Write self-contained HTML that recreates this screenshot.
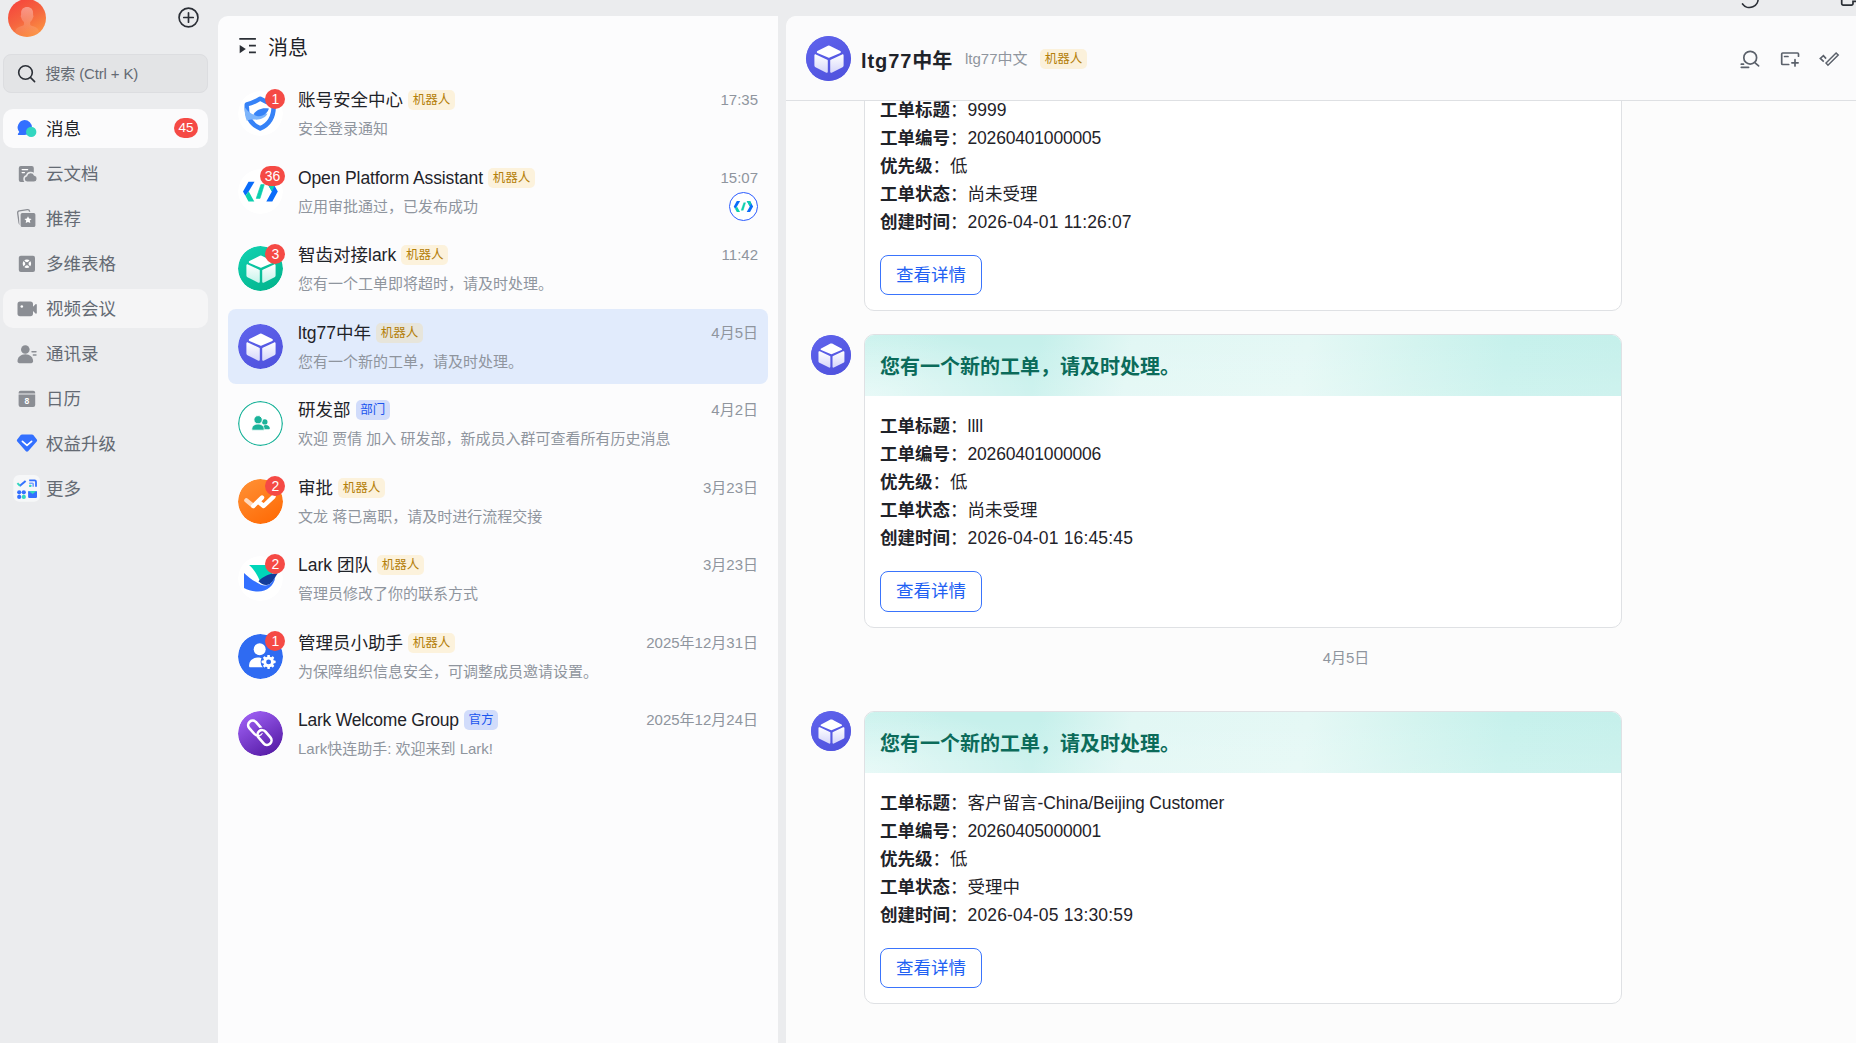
<!DOCTYPE html>
<html lang="zh-CN">
<head>
<meta charset="utf-8">
<title>Lark</title>
<style>
*{box-sizing:border-box;margin:0;padding:0}
html,body{width:1856px;height:1043px;overflow:hidden}
body{background:#ebecee;font-family:"Liberation Sans","Noto Sans CJK SC",sans-serif;color:#1f2329;position:relative;-webkit-font-smoothing:antialiased}
.abs{position:absolute}
svg{display:block}
/* sidebar */
#side{position:absolute;left:0;top:0;width:218px;height:1043px}
.me{position:absolute;left:7.900px;top:-1.200px;width:38.200px;height:38.200px;border-radius:50%;background:linear-gradient(150deg,#f6423c 5%,#f5663f 50%,#fd9a42 95%);overflow:hidden}
.plus{position:absolute;left:177.700px;top:7px;width:21px;height:21px}
.search{position:absolute;left:3px;top:54px;width:205px;height:39px;border-radius:8px;background:#e3e4e6;border:1px solid #dcdde0}
.search svg{position:absolute;left:12.800px;top:9.200px}
.search span{position:absolute;left:41.500px;top:1px;line-height:36px;font-size:15px;letter-spacing:-.150px;color:#646a73;white-space:nowrap}
.nav{position:absolute;left:3px;width:205px;height:39px;border-radius:10px}
.nav.on{background:#fbfbfc}
.nav.hv{background:#f5f5f6}
.nav .ic{position:absolute;left:12px;top:7px;width:24px;height:24px}
.nav .tx{position:absolute;left:43px;top:1px;line-height:38px;font-size:17.5px;color:#646a73;white-space:nowrap}
.nav.on .tx{color:#1f2329}
.nav .cnt{position:absolute;right:10px;top:9px;height:20px;min-width:24px;padding:0 4px;border-radius:10px;background:#f54a45;color:#fff;font-size:13.5px;line-height:20px;text-align:center}
/* list panel */
#list{position:absolute;left:218px;top:16px;width:560px;height:1027px;background:#fcfcfd;border-top-left-radius:10px}
.lh{position:absolute;left:50px;top:17px;font-size:20px;line-height:30px;color:#1f2329}
.it{position:absolute;left:10px;width:540px;height:75px;border-radius:8px}
.it.sel{background:#e1ebfc}
.it .av{position:absolute;left:10.200px;top:15px;width:45px;height:45px;border-radius:50%;overflow:hidden}
.it .nm{position:absolute;left:70px;top:10px;height:28px;line-height:28px;font-size:17.5px;color:#1f2329;white-space:nowrap;display:flex;align-items:center}
.it .sb{position:absolute;left:70px;top:42px;line-height:22px;font-size:15px;color:#8f959e;white-space:nowrap}
.it .tm{position:absolute;right:10px;top:13px;line-height:22px;font-size:15px;color:#8f959e;white-space:nowrap}
.tag{display:inline-block;letter-spacing:0;margin-left:5px;height:20px;line-height:20px;padding:0 4.750px;border-radius:5px;font-size:12.500px;background:rgba(255,207,92,.2);color:#b47f0a}
.tag.b{background:#d1dcfb;color:#1a55ee}
.bd{position:absolute;top:12.700px;height:20px;min-width:20px;border-radius:10px;background:#f54a45;color:#fff;font-size:14px;line-height:20px;text-align:center;padding:0 5px}
/* chat */
#chat{position:absolute;left:786px;top:16px;width:1070px;height:1027px;background:#fcfcfc;border-top-left-radius:10px;overflow:hidden}
#chead{position:absolute;left:0;top:0;width:1070px;height:85px;border-bottom:1px solid #dee0e3;background:#fbfbfc;z-index:5;border-top-left-radius:10px}
.card{position:absolute;left:78px;width:758px;background:#fff;border:1px solid #dfe1e4;border-radius:10px;overflow:hidden}
.ch{position:absolute;left:0;top:0;width:100%;height:61px;background:radial-gradient(ellipse 170px 70px at 0% 100%,rgba(255,255,255,.5),rgba(255,255,255,0) 100%),linear-gradient(180deg,rgba(255,255,255,0) 0%,rgba(255,255,255,.16) 100%),linear-gradient(100deg,#c9f2ed 0%,#c5f0eb 10%,#c5f0eb 23%,#e1f7f4 35%,#e4f8f5 58%,#d3f4ef 72%,#c6f1ec 84%,#c5f0eb 100%)}
.ch span{position:absolute;left:15px;top:17px;font-size:20px;line-height:30px;font-weight:bold;color:#0b6b5a;white-space:nowrap}
.ln{position:absolute;left:15px;font-size:17.5px;line-height:28px;white-space:nowrap;color:#1f2329}
.ln b{font-weight:bold}
.btn{position:absolute;left:15px;width:102px;height:40px;border:1px solid #3a74fc;border-radius:8px;color:#2160f3;font-size:17.5px;line-height:38px;text-align:center;background:#fff}
.mav{position:absolute;left:25px;width:40px;height:40px;border-radius:50%;overflow:hidden}
</style>
</head>
<body>
<div id="side">
  <div class="me"><svg width="38.200" height="38.200" viewBox="0 0 38.200 38.200"><defs><linearGradient id="meg" x1="0" y1="0" x2="0" y2="1"><stop offset="0" stop-color="#fff" stop-opacity=".38"/><stop offset="1" stop-color="#fff" stop-opacity="0"/></linearGradient></defs><path d="M19.100 8.100c3.600 0 6 2.200 6 5.800v2.400c.5.200.6 1.600-.200 2.400-.5 2-1.500 3.300-2.700 4.300v2.300c0 .8.500 1.300 1.300 1.500 3.500.8 6.500 2 7.200 4.700l.8 6.700H6.700l.8-6.700c.7-2.700 3.700-3.900 7.200-4.700.8-.2 1.300-.7 1.300-1.500V23c-1.200-1-2.200-2.300-2.700-4.300-.8-.8-.7-2.200-.2-2.400v-2.400c0-3.600 2.400-5.800 6-5.800z" fill="url(#meg)"/></svg></div>
  <svg class="plus" viewBox="0 0 20 20"><circle cx="10" cy="10" r="9" fill="none" stroke="#2b2f36" stroke-width="1.6"/><path d="M10 5.5v9M5.5 10h9" stroke="#2b2f36" stroke-width="1.6" stroke-linecap="round"/></svg>
  <div class="search"><svg width="20" height="20" viewBox="0 0 20 20"><circle cx="8.5" cy="8.5" r="6.8" fill="none" stroke="#2b2f36" stroke-width="1.6"/><path d="M13.6 13.6l4 4" stroke="#2b2f36" stroke-width="1.6" stroke-linecap="round"/></svg><span>搜索 (Ctrl + K)</span></div>
  <div class="nav on" style="top:109px"><div class="ic"><svg width="24" height="24" viewBox="0 0 24 24"><path d="M9.5 4a7.5 7.5 0 1 1 0 15H3.6c-.7 0-1-.8-.6-1.3l1.3-1.6A7.5 7.5 0 0 1 9.5 4z" fill="#3370ff"/><circle cx="16.2" cy="15.9" r="5.2" fill="#33d6c0"/></svg></div><div class="tx">消息</div><div class="cnt">45</div></div>
  <div class="nav" style="top:154px"><div class="ic"><svg width="24" height="24" viewBox="0 0 24 24"><rect x="3.8" y="5" width="15" height="16" rx="2" fill="#8b8e94"/><path d="M7.200 8.600h5.400M7.200 11.600h2.200" stroke="#fff" stroke-width="1.400" stroke-linecap="round"/><path d="M12 21.2a3.3 3.3 0 0 1-.4-6.5 4.2 4.2 0 0 1 8-.6 3.6 3.6 0 0 1-.8 7.100z" fill="#8b8e94" stroke="#ebecee" stroke-width="1.5"/></svg></div><div class="tx">云文档</div></div>
  <div class="nav" style="top:199px"><div class="ic"><svg width="24" height="24" viewBox="0 0 24 24"><rect x="3.300" y="4.200" width="12" height="14" rx="2" fill="none" stroke="#8b8e94" stroke-width="1.300" transform="rotate(-8 9 11)"/><rect x="5" y="6.4" width="16" height="15.2" rx="2.2" fill="#8b8e94" stroke="#ebecee" stroke-width="1.2"/><path d="M13 10.300l1.100 2.300 2.500.3-1.800 1.700.5 2.500-2.300-1.200-2.300 1.200.5-2.500-1.800-1.700 2.500-.3z" fill="#fff"/></svg></div><div class="tx">推荐</div></div>
  <div class="nav" style="top:244px"><div class="ic"><svg width="24" height="24" viewBox="0 0 24 24"><rect x="3.800" y="4.700" width="16.200" height="16.200" rx="2" fill="#8b8e94"/><circle cx="11.900" cy="12.800" r="3" fill="none" stroke="#fff" stroke-width="2.400"/><path d="M8.500 9.400l6.800 6.800M15.300 9.400l-6.800 6.800" stroke="#8b8e94" stroke-width="1.100"/></svg></div><div class="tx">多维表格</div></div>
  <div class="nav hv" style="top:289px"><div class="ic"><svg width="24" height="24" viewBox="0 0 24 24"><rect x="2.500" y="5.500" width="15.500" height="14.700" rx="2.600" fill="#8b8e94"/><path d="M17.500 11.300l3-3.100c.5-.5 1.300-.1 1.300.600v8.100c0 .7-.8 1.100-1.300.600l-3-3.100z" fill="#8b8e94"/><circle cx="6.800" cy="10.500" r="1.300" fill="#fff"/></svg></div><div class="tx">视频会议</div></div>
  <div class="nav" style="top:334px"><div class="ic"><svg width="24" height="24" viewBox="0 0 24 24"><circle cx="10.300" cy="8.500" r="4.300" fill="#8b8e94"/><path d="M2.500 20.300c0-4 3.200-7 7.800-7s7.800 3 7.800 7c0 1.100-.8 1.900-1.900 1.900H4.400c-1.100 0-1.900-.8-1.900-1.900z" fill="#8b8e94"/><path d="M17 10.800h4M18.300 14h2.700" stroke="#8b8e94" stroke-width="1.400" stroke-linecap="round"/></svg></div><div class="tx">通讯录</div></div>
  <div class="nav" style="top:379px"><div class="ic"><svg width="24" height="24" viewBox="0 0 24 24"><path d="M5.600 4.800h12.600a2 2 0 0 1 2 2v.6H3.600v-.6a2 2 0 0 1 2-2z" fill="#8b8e94"/><path d="M3.600 8.600h16.600V19a2 2 0 0 1-2 2H5.600a2 2 0 0 1-2-2z" fill="#8b8e94"/><text x="11.900" y="18" font-size="8.500" font-weight="bold" fill="#fff" text-anchor="middle" font-family="Liberation Sans, sans-serif">8</text></svg></div><div class="tx">日历</div></div>
  <div class="nav" style="top:424px"><div class="ic"><svg width="24" height="24" viewBox="0 0 24 24"><path d="M7 3.400h10c.5 0 1 .2 1.300.6l3.500 4.600c.5.600.4 1.400-.1 1.900l-8.600 9.700c-.6.600-1.600.6-2.200 0L2.300 10.500c-.5-.5-.6-1.300-.1-1.900l3.500-4.600c.3-.4.800-.6 1.300-.6z" fill="#3370ff"/><path d="M7.400 10.400l4.600 3.900 4.600-3.900" fill="none" stroke="#fff" stroke-width="1.700" stroke-linecap="round" stroke-linejoin="round"/></svg></div><div class="tx">权益升级</div></div>
  <div class="nav" style="top:469px"><div class="ic"><svg width="28" height="28" viewBox="-2 -2 28 28" style="margin:-2px"><rect x="-1.700" y="-1.100" width="26.800" height="26.800" rx="6" fill="#f6f7f8"/><path d="M4.600 10l6-5" stroke="#3370ff" stroke-width="2" stroke-linecap="butt"/><path d="M2.400 7.100l2.600 2.600" stroke="#33d6c0" stroke-width="2"/><path d="M14.200 4.400h5.500a1.300 1.300 0 0 1 1.300 1.300v5" fill="none" stroke="#3370ff" stroke-width="1.800"/><path d="M14.200 7.300h3.200a.8.800 0 0 1 .8.800v2.600" fill="none" stroke="#7aa2ff" stroke-width="1.600"/><rect x="14.100" y="8.800" width="2.300" height="2.300" rx=".5" fill="#33d6c0"/><circle cx="4.200" cy="16.300" r="2.100" fill="#3370ff"/><circle cx="8.800" cy="16.300" r="2.100" fill="#3370ff"/><circle cx="4.200" cy="20.900" r="2.100" fill="#3370ff"/><circle cx="8.800" cy="20.900" r="2.100" fill="#33d6c0"/><rect x="13.100" y="15" width="8.900" height="6.900" rx=".8" fill="#3370ff"/><path d="M13.600 15h7.900l-3.950 3z" fill="#33d6c0"/></svg></div><div class="tx">更多</div></div>
</div>
<svg class="abs" style="left:1736px;top:0" width="120" height="10" viewBox="0 0 120 10" fill="none" stroke="#2b2f36" stroke-width="1.700"><path d="M21.940 -2.560A8.570 8.570 0 0 1 6.570 3.970" stroke-linecap="round"/><path d="M105.700 -2V3.600a1.500 1.500 0 0 0 1.500 1.500h8.300a1.500 1.500 0 0 0 1.500-1.500V1.400h3"/></svg>
<div id="list">
  <svg class="abs" style="left:20px;top:20px" width="20" height="20" viewBox="0 0 20 20"><path d="M1.300 2.800h16.600M11 9.600h6.900M11 16.400h6.900" stroke="#2b2f36" stroke-width="1.800" fill="none"/><path d="M1.700 9l6.100 4.100-6.100 4.100z" fill="#2b2f36"/></svg>
  <div class="lh">消息</div>
  <div class="it" style="top:60px"><div class="av"><svg width="45" height="45" viewBox="0 0 45 45"><circle cx="22.500" cy="22.500" r="22.500" fill="#fff"/><path d="M22.200 7.700C18.200 10.200 13.700 12.300 8.800 13.400C8.300 24 12 33 22.200 37.400C32.400 33 36.100 24 35.600 13.400C30.700 12.300 26.200 10.200 22.200 7.700z" fill="none" stroke="#3682f7" stroke-width="4.500" stroke-linejoin="round"/><path d="M6.600 16C9.500 20.500 14 23.500 17.500 24L29.500 22.500C27.500 27 22 29 17 28.600C13 28.400 10.500 29 8.800 29.800C7 25.500 6.500 20.500 6.600 16z" fill="#7db5fb"/><path d="M15.500 23.300C18 19 24 16 30.900 17.600C29.500 22.500 25 26 19 25C17.500 24.700 16.300 24 15.500 23.300z" fill="#3682f7"/></svg></div><div class="bd" style="left:37.300px">1</div><div class="nm">账号安全中心<span class="tag">机器人</span></div><div class="sb">安全登录通知</div><div class="tm">17:35</div></div>
  <div class="it" style="top:137.5px"><div class="av"><svg width="45" height="45" viewBox="0 0 45 45"><circle cx="22.5" cy="22.500" r="22.500" fill="#fff"/><path d="M10.500 12.700H16.500L10.700 22.600 7.400 26.800 5 22.600z" fill="#0a6cfa"/><path d="M10.700 22.600L16.300 32.400H10.500L7.400 26.800z" fill="#0ccfae"/><path d="M22.900 15.600H26.300L22 29.400H18.200z" fill="#0ccfae" stroke="#0ccfae" stroke-width=".600" stroke-linejoin="round"/><path d="M28.300 12.700H34.300L39.800 22.600 34.300 32.400H28.300L33.900 22.600z" fill="#0a6cfa"/><path d="M28.300 12.700H34.300L36.600 16.800 33.900 22.600z" fill="#0ccfae"/></svg></div><div class="bd" style="left:31.800px;width:25.500px;padding:0">36</div><div class="nm" style="letter-spacing:-.120px">Open Platform Assistant<span class="tag">机器人</span></div><div class="sb">应用审批通过，已发布成功</div><div class="tm">15:07</div><div class="abs" style="left:501px;top:38.500px;width:29px;height:29px;border-radius:50%;border:1.400px solid #2b5cff;background:#fff"><svg width="25" height="25" viewBox="0 0 45 45" style="position:absolute;left:.800px;top:.800px"><path d="M10.500 12.700H16.500L10.700 22.600 7.400 26.800 5 22.600z" fill="#0a6cfa"/><path d="M10.700 22.600L16.300 32.400H10.500L7.400 26.800z" fill="#0ccfae"/><path d="M22.900 15.600H26.300L22 29.400H18.200z" fill="#0ccfae" stroke="#0ccfae" stroke-width=".600" stroke-linejoin="round"/><path d="M28.300 12.700H34.300L39.800 22.600 34.300 32.400H28.300L33.900 22.600z" fill="#0a6cfa"/><path d="M28.300 12.700H34.300L36.600 16.800 33.900 22.600z" fill="#0ccfae"/></svg></div></div>
  <div class="it" style="top:215px"><div class="av"><svg width="45" height="45" viewBox="0 0 45 45"><defs><linearGradient id="cga" x1="0.2" y1="0" x2="0.8" y2="1"><stop offset="0" stop-color="#10d0b0"/><stop offset="1" stop-color="#03b48c"/></linearGradient><linearGradient id="cgb" x1="0" y1="0" x2="0" y2="1"><stop offset="0" stop-color="#fff"/><stop offset="1" stop-color="#c5f3ea"/></linearGradient></defs><circle cx="22.5" cy="22.5" r="22.5" fill="url(#cga)"/><path d="M21.900 9.700a2 2 0 0 1 1.800 0l10.600 5.400c.8.400.8 1.500 0 1.900l-10.600 4.500a2 2 0 0 1-1.600 0L11.400 17c-.8-.4-.8-1.500 0-1.900z" fill="#fff"/><path d="M8.400 19.400c0-.8.800-1.300 1.500-1l11.300 5.300c.4.200.6.500.6.900v11.200c0 .8-.8 1.300-1.500.9L9.500 31.300a2 2 0 0 1-1.100-1.800z" fill="url(#cgb)"/><path d="M37.600 19.400c0-.8-.8-1.300-1.500-1l-11.300 5.300c-.4.200-.6.500-.6.900v11.200c0 .8.800 1.300 1.500.9l10.800-5.400a2 2 0 0 0 1.100-1.800z" fill="url(#cgb)"/></svg></div><div class="bd" style="left:37.300px">3</div><div class="nm">智齿对接lark<span class="tag">机器人</span></div><div class="sb">您有一个工单即将超时，请及时处理。</div><div class="tm">11:42</div></div>
  <div class="it sel" style="top:292.5px"><div class="av"><svg width="45" height="45" viewBox="0 0 45 45"><defs><linearGradient id="cba" x1="0.2" y1="0" x2="0.8" y2="1"><stop offset="0" stop-color="#5f63ec"/><stop offset="1" stop-color="#4f52dd"/></linearGradient><linearGradient id="cbb" x1="0" y1="0" x2="0" y2="1"><stop offset="0" stop-color="#fff"/><stop offset="1" stop-color="#d5d6fa"/></linearGradient></defs><circle cx="22.5" cy="22.5" r="22.5" fill="url(#cba)"/><path d="M21.900 9.700a2 2 0 0 1 1.800 0l10.600 5.400c.8.400.8 1.500 0 1.900l-10.600 4.500a2 2 0 0 1-1.600 0L11.400 17c-.8-.4-.8-1.500 0-1.900z" fill="#fff"/><path d="M8.400 19.400c0-.8.800-1.300 1.500-1l11.300 5.300c.4.200.6.500.6.900v11.200c0 .8-.8 1.300-1.500.9L9.500 31.300a2 2 0 0 1-1.100-1.800z" fill="url(#cbb)"/><path d="M37.600 19.400c0-.8-.8-1.300-1.500-1l-11.300 5.300c-.4.200-.6.500-.6.900v11.200c0 .8.800 1.300 1.500.9l10.800-5.400a2 2 0 0 0 1.100-1.800z" fill="url(#cbb)"/></svg></div><div class="nm">ltg77中年<span class="tag">机器人</span></div><div class="sb">您有一个新的工单，请及时处理。</div><div class="tm">4月5日</div></div>
  <div class="it" style="top:370px"><div class="av"><svg width="45" height="45" viewBox="0 0 45 45"><circle cx="22.500" cy="22.500" r="21.800" fill="#fff" stroke="#1bb39a" stroke-width="1.300"/><circle cx="26.800" cy="20.900" r="2.700" fill="#1bb39a"/><path d="M24.500 28.200c0-2.600 1.500-4.100 3.300-4.100 2.200 0 4 1.500 4 3.400 0 .4-.3.700-.7.700z" fill="#1bb39a"/><circle cx="20.100" cy="18.800" r="4.200" fill="#1bb39a" stroke="#fff" stroke-width="1"/><path d="M13.800 28.200c0-3 2.700-5.200 6.200-5.200s6.200 2.200 6.200 5.200c0 .6-.4 1-1 1H14.800c-.6 0-1-.4-1-1z" fill="#1bb39a" stroke="#fff" stroke-width=".8"/></svg></div><div class="nm">研发部<span class="tag b">部门</span></div><div class="sb">欢迎 贾倩 加入 研发部，新成员入群可查看所有历史消息</div><div class="tm">4月2日</div></div>
  <div class="it" style="top:447.5px"><div class="av"><svg width="45" height="45" viewBox="0 0 45 45"><defs><linearGradient id="og" x1="0.2" y1="0" x2="0.8" y2="1"><stop offset="0" stop-color="#ff8f33"/><stop offset="1" stop-color="#ff6a05"/></linearGradient></defs><circle cx="22.500" cy="22.500" r="22.500" fill="url(#og)"/><path d="M8.400 21.400l6.900 5.600" stroke="#fff" stroke-opacity=".7" stroke-width="4.400" fill="none" stroke-linecap="round"/><path d="M15.300 27l8.700-8.400" stroke="#fff" stroke-width="4.400" fill="none" stroke-linecap="round"/><path d="M21 23.200l4.600 3.800 10-9.400" stroke="#fff" stroke-width="4.400" fill="none" stroke-linecap="round" stroke-linejoin="round"/></svg></div><div class="bd" style="left:37.300px">2</div><div class="nm">审批<span class="tag">机器人</span></div><div class="sb">文龙 蒋已离职，请及时进行流程交接</div><div class="tm">3月23日</div></div>
  <div class="it" style="top:525px"><div class="av"><svg width="45" height="45" viewBox="0 0 45 45"><circle cx="22.500" cy="22.500" r="22.500" fill="#fff"/><path d="M11.100 8.900H30c2.200 2.600 3.600 5.400 4.400 8.600L21.600 24.600C19.300 18.300 15.500 12.700 11.100 8.900z" fill="#00d6b9"/><path d="M6 16.900C11 21.500 17 26 22.500 28.500C27 30.500 31 29.500 33.500 26.500L37.200 21.500C36 29.500 29 35.500 20 35.500C14.500 35.500 9.500 34 6 31.900z" fill="#3370ff"/><path d="M20.500 25.200C25 20.500 32.500 17 39.800 17.400C37.500 20 35.500 25 31.500 28.300C27.500 30.300 23.500 28.300 20.500 25.200z" fill="#133c9a"/></svg></div><div class="bd" style="left:37.300px">2</div><div class="nm">Lark 团队<span class="tag">机器人</span></div><div class="sb">管理员修改了你的联系方式</div><div class="tm">3月23日</div></div>
  <div class="it" style="top:602.5px"><div class="av"><svg width="45" height="45" viewBox="0 0 45 45"><circle cx="22.500" cy="22.500" r="22.500" fill="#2f6bf2"/><circle cx="21.700" cy="15.200" r="6" fill="#fff"/><path d="M11.100 31.300c0-4.600 3.600-7.800 8.600-7.800 2.300 0 4.300.6 5.800 1.800v8H12.100c-.6 0-1-.4-1-1z" fill="#fff"/><circle cx="30.600" cy="27.900" r="8" fill="#2f6bf2"/><rect x="29.300" y="20.900" width="2.600" height="3.200" rx=".6" fill="#fff" transform="rotate(0 30.600 27.900)"/><rect x="29.300" y="20.900" width="2.600" height="3.200" rx=".6" fill="#fff" transform="rotate(45 30.600 27.900)"/><rect x="29.300" y="20.900" width="2.600" height="3.200" rx=".6" fill="#fff" transform="rotate(90 30.600 27.900)"/><rect x="29.300" y="20.900" width="2.600" height="3.200" rx=".6" fill="#fff" transform="rotate(135 30.600 27.900)"/><rect x="29.300" y="20.900" width="2.600" height="3.200" rx=".6" fill="#fff" transform="rotate(180 30.600 27.900)"/><rect x="29.300" y="20.900" width="2.600" height="3.200" rx=".6" fill="#fff" transform="rotate(225 30.600 27.900)"/><rect x="29.300" y="20.900" width="2.600" height="3.200" rx=".6" fill="#fff" transform="rotate(270 30.600 27.900)"/><rect x="29.300" y="20.900" width="2.600" height="3.200" rx=".6" fill="#fff" transform="rotate(315 30.600 27.900)"/><circle cx="30.600" cy="27.900" r="3.900" fill="none" stroke="#fff" stroke-width="2.900"/></svg></div><div class="bd" style="left:37.300px">1</div><div class="nm">管理员小助手<span class="tag">机器人</span></div><div class="sb">为保障组织信息安全，可调整成员邀请设置。</div><div class="tm">2025年12月31日</div></div>
  <div class="it" style="top:680px"><div class="av"><svg width="45" height="45" viewBox="0 0 45 45"><defs><linearGradient id="pg" x1="0.2" y1="0" x2="0.8" y2="1"><stop offset="0" stop-color="#a061f5"/><stop offset="1" stop-color="#5319a3"/></linearGradient></defs><circle cx="22.500" cy="22.500" r="22.500" fill="url(#pg)"/><g fill="none" transform="rotate(49 22.500 22.500)"><rect x="6.500" y="18.400" width="16.600" height="9" rx="4.500" stroke="#fff" stroke-width="2.600"/><path d="M23.100 21.200a4.500 4.500 0 0 0-3.800 2.200" stroke="#7537c6" stroke-width="5.600" stroke-linecap="butt"/><rect x="19.900" y="17.600" width="16.600" height="9" rx="4.500" stroke="#7537c6" stroke-width="5.400" stroke-dasharray="0 36 14 100"/><rect x="19.900" y="17.600" width="16.600" height="9" rx="4.500" stroke="#fff" stroke-width="2.600"/></g></svg></div><div class="nm" style="letter-spacing:-.240px">Lark Welcome Group<span class="tag b">官方</span></div><div class="sb">Lark快连助手: 欢迎来到 Lark!</div><div class="tm">2025年12月24日</div></div>
</div>
<div id="chat">
  <div id="chead">
    <div class="abs" style="left:20px;top:20px;width:45px;height:45px;border-radius:50%;background:#5b5fe6;overflow:hidden"><svg width="45" height="45" viewBox="0 0 45 45"><defs><linearGradient id="hg1a" x1="0.2" y1="0" x2="0.8" y2="1"><stop offset="0" stop-color="#5f63ec"/><stop offset="1" stop-color="#4f52dd"/></linearGradient><linearGradient id="hg1b" x1="0" y1="0" x2="0" y2="1"><stop offset="0" stop-color="#fff"/><stop offset="1" stop-color="#d5d6fa"/></linearGradient></defs><circle cx="22.5" cy="22.5" r="22.5" fill="url(#hg1a)"/><path d="M21.900 9.700a2 2 0 0 1 1.800 0l10.600 5.400c.8.400.8 1.500 0 1.900l-10.600 4.500a2 2 0 0 1-1.600 0L11.400 17c-.8-.4-.8-1.500 0-1.900z" fill="#fff"/><path d="M8.400 19.400c0-.8.800-1.300 1.500-1l11.300 5.300c.4.200.6.500.6.900v11.200c0 .8-.8 1.300-1.500.9L9.500 31.300a2 2 0 0 1-1.100-1.800z" fill="url(#hg1b)"/><path d="M37.600 19.400c0-.8-.8-1.300-1.500-1l-11.300 5.300c-.4.200-.6.500-.6.900v11.200c0 .8.800 1.300 1.500.9l10.800-5.400a2 2 0 0 0 1.100-1.800z" fill="url(#hg1b)"/></svg></div>
    <div class="abs" style="left:75px;top:30px;font-size:20px;line-height:30px;font-weight:bold;white-space:nowrap"><span style="letter-spacing:.900px">ltg77</span>中年</div>
    <div class="abs" style="left:179px;top:31px;font-size:15px;line-height:24px;color:#8f959e;white-space:nowrap">ltg77中文</div>
    <div class="abs tag" style="left:254px;top:33px;margin:0">机器人</div>
    <svg class="abs" style="left:950px;top:31px" width="24" height="24" viewBox="0 0 24 24" fill="none" stroke="#5b616b" stroke-width="1.700" stroke-linecap="round"><circle cx="14.200" cy="10.700" r="6.400"/><path d="M19.100 15.800l3.500 3.100M5.300 17.200h2.200M5.300 20.300h7.300"/></svg>
    <svg class="abs" style="left:990px;top:31px" width="24" height="24" viewBox="0 0 24 24" fill="none" stroke="#5b616b" stroke-width="1.700" stroke-linecap="round" stroke-linejoin="round"><path d="M22.500 9.200V7a1 1 0 0 0-1-1H6.700a1 1 0 0 0-1 1v9.500a1 1 0 0 0 1 1h6M8.600 9.500h3.400M19 12.700v6.200M15.900 15.800h6.200"/></svg>
    <svg class="abs" style="left:1030px;top:31px" width="24" height="24" viewBox="0 0 24 24" fill="none" stroke="#5b616b" stroke-width="1.600" stroke-linecap="butt" stroke-linejoin="miter"><path d="M10.080 11.600L7.400 8.730 4.330 11.410 7.780 14.670"/><path d="M10.030 16.050L20.100 5.990 22.220 7.920 11.960 18.180z" stroke-width="1.500" stroke-linejoin="miter"/></svg>
  </div>
  <div class="card" style="top:2px;height:293px">
    <div class="ch"><span>您有一个新的工单，请及时处理。</span></div>
    <div class="ln" style="top:77px"><b>工单标题</b>：9999</div>
    <div class="ln" style="top:105px"><b>工单编号</b>：<span style="letter-spacing:-.190px">20260401000005</span></div>
    <div class="ln" style="top:133px"><b>优先级</b>：低</div>
    <div class="ln" style="top:161px"><b>工单状态</b>：尚未受理</div>
    <div class="ln" style="top:189px"><b>创建时间</b>：<span style="letter-spacing:.160px">2026-04-01 11:26:07</span></div>
    <div class="btn" style="top:236px">查看详情</div>
  </div>
  <div class="mav" style="top:318.500px;background:#5b5fe6"><svg width="40" height="40" viewBox="0 0 45 45"><defs><linearGradient id="hg2a" x1="0.2" y1="0" x2="0.8" y2="1"><stop offset="0" stop-color="#5f63ec"/><stop offset="1" stop-color="#4f52dd"/></linearGradient><linearGradient id="hg2b" x1="0" y1="0" x2="0" y2="1"><stop offset="0" stop-color="#fff"/><stop offset="1" stop-color="#d5d6fa"/></linearGradient></defs><circle cx="22.5" cy="22.5" r="22.5" fill="url(#hg2a)"/><path d="M21.900 9.700a2 2 0 0 1 1.800 0l10.600 5.400c.8.400.8 1.500 0 1.900l-10.600 4.500a2 2 0 0 1-1.600 0L11.400 17c-.8-.4-.8-1.500 0-1.900z" fill="#fff"/><path d="M8.400 19.400c0-.8.800-1.300 1.500-1l11.300 5.300c.4.200.6.500.6.900v11.200c0 .8-.8 1.300-1.500.9L9.500 31.300a2 2 0 0 1-1.100-1.800z" fill="url(#hg2b)"/><path d="M37.600 19.400c0-.8-.8-1.300-1.500-1l-11.300 5.300c-.4.200-.6.500-.6.900v11.200c0 .8.800 1.300 1.500.9l10.800-5.400a2 2 0 0 0 1.100-1.800z" fill="url(#hg2b)"/></svg></div>
  <div class="card" style="top:318px;height:294px">
    <div class="ch"><span>您有一个新的工单，请及时处理。</span></div>
    <div class="ln" style="top:77px"><b>工单标题</b>：llll</div>
    <div class="ln" style="top:105px"><b>工单编号</b>：<span style="letter-spacing:-.190px">20260401000006</span></div>
    <div class="ln" style="top:133px"><b>优先级</b>：低</div>
    <div class="ln" style="top:161px"><b>工单状态</b>：尚未受理</div>
    <div class="ln" style="top:189px"><b>创建时间</b>：<span style="letter-spacing:.160px">2026-04-01 16:45:45</span></div>
    <div class="btn" style="top:236px;height:41px;line-height:39px">查看详情</div>
  </div>
  <div class="abs" style="left:510px;top:631px;width:100px;text-align:center;font-size:15px;line-height:22px;color:#8f959e">4月5日</div>
  <div class="mav" style="top:695px;background:#5b5fe6"><svg width="40" height="40" viewBox="0 0 45 45"><defs><linearGradient id="hg3a" x1="0.2" y1="0" x2="0.8" y2="1"><stop offset="0" stop-color="#5f63ec"/><stop offset="1" stop-color="#4f52dd"/></linearGradient><linearGradient id="hg3b" x1="0" y1="0" x2="0" y2="1"><stop offset="0" stop-color="#fff"/><stop offset="1" stop-color="#d5d6fa"/></linearGradient></defs><circle cx="22.5" cy="22.5" r="22.5" fill="url(#hg3a)"/><path d="M21.900 9.700a2 2 0 0 1 1.800 0l10.600 5.400c.8.400.8 1.500 0 1.900l-10.600 4.500a2 2 0 0 1-1.600 0L11.400 17c-.8-.4-.8-1.500 0-1.900z" fill="#fff"/><path d="M8.400 19.400c0-.8.800-1.300 1.500-1l11.300 5.300c.4.200.6.500.6.900v11.200c0 .8-.8 1.300-1.500.9L9.500 31.300a2 2 0 0 1-1.100-1.800z" fill="url(#hg3b)"/><path d="M37.600 19.400c0-.8-.8-1.300-1.500-1l-11.300 5.300c-.4.200-.6.500-.6.900v11.200c0 .8.800 1.300 1.500.9l10.800-5.400a2 2 0 0 0 1.100-1.800z" fill="url(#hg3b)"/></svg></div>
  <div class="card" style="top:695px;height:293px">
    <div class="ch"><span>您有一个新的工单，请及时处理。</span></div>
    <div class="ln" style="top:77px"><b>工单标题</b>：客户留言<span style="letter-spacing:-.130px">-China/Beijing Customer</span></div>
    <div class="ln" style="top:105px"><b>工单编号</b>：<span style="letter-spacing:-.190px">20260405000001</span></div>
    <div class="ln" style="top:133px"><b>优先级</b>：低</div>
    <div class="ln" style="top:161px"><b>工单状态</b>：受理中</div>
    <div class="ln" style="top:189px"><b>创建时间</b>：<span style="letter-spacing:.160px">2026-04-05 13:30:59</span></div>
    <div class="btn" style="top:236px">查看详情</div>
  </div>
</div>
</body>
</html>
